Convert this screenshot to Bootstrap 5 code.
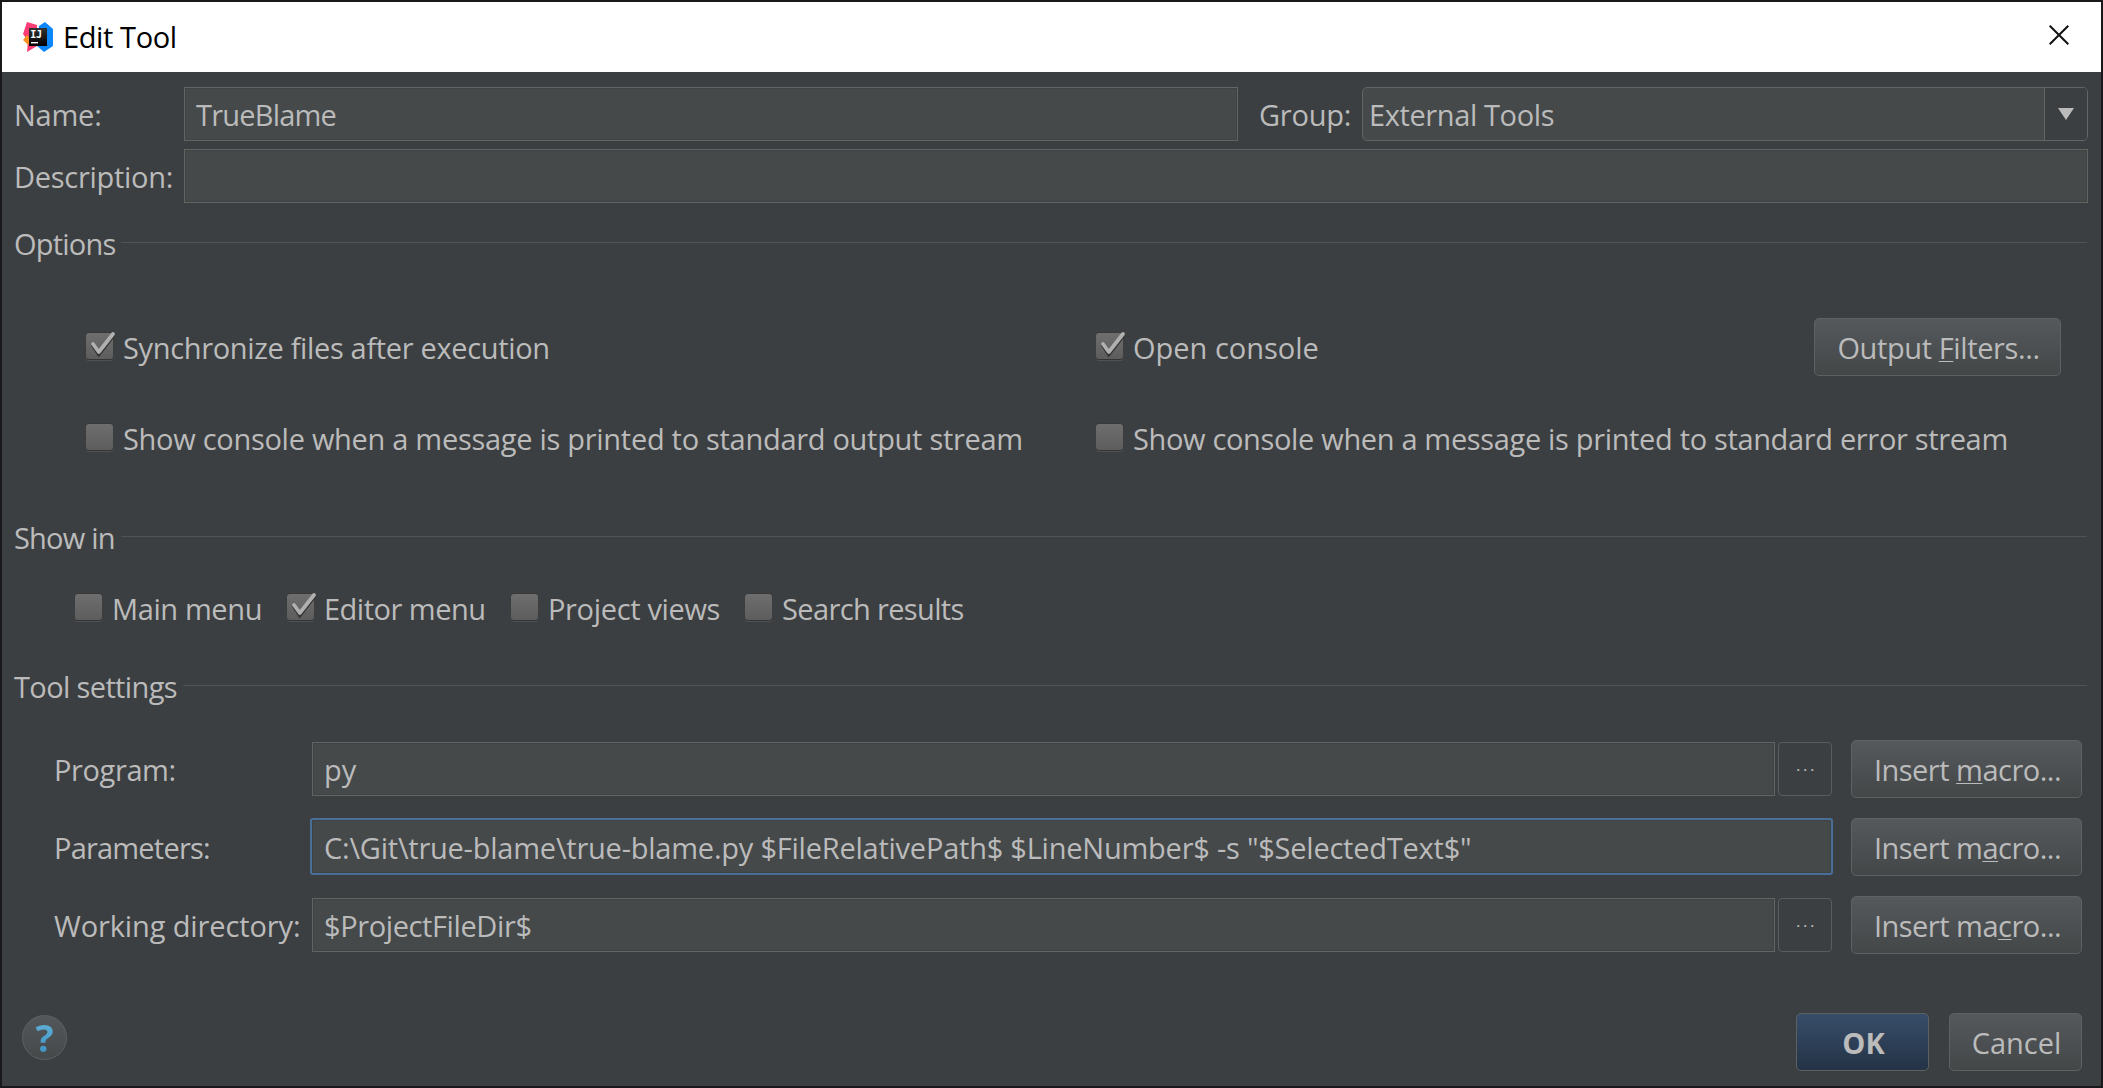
<!DOCTYPE html>
<html lang="en">
<head>
<meta charset="utf-8">
<meta name="viewport" content="width=device-width, initial-scale=1">
<title>Edit Tool</title>
<link rel="stylesheet" href="https://cdn.jsdelivr.net/npm/bootstrap@5.3.0/dist/css/bootstrap.min.css">
<style>
  body { background: #3c3f41; color: #bbb; font: 29px/40px "Open Sans", "Noto Sans", sans-serif; }
  .dialog { height: 1088px; border: 2px solid #19191b; overflow: hidden; white-space: nowrap; }
  .titlebar { height: 70px; background: #fff; color: #000; padding: 0 32px 0 21px; }
  .titlebar .caption { margin-left: 8px; }
  .content { padding: 15px 13px 0 12px; }
  .label-text { padding-top: 2px; }
  .col-label { width: 170px; flex: none; }
  .col-label-wide { width: 257px; flex: none; }
  .group-label { padding: 2px 11px 0 21px; width: 124px; flex: none; }

  .field { height: 54px; min-width: 0; background: #45494a; border: 1px solid #646464; border-radius: 0; color: #bbb;
    font: inherit; line-height: 40px; padding: 7px 0 0 11px; box-shadow: inset 0 0 0 1px #3f4344; }
  .combo { width: 726px; border-radius: 5px; padding: 0; box-shadow: none; overflow: hidden; }
  .combo .value { padding: 7px 0 0 6px; }
  .combo .arrow { width: 43px; background: #3c3f41; border-left: 1px solid #646464; }
  .desc-row { margin-top: 8px; }

  .group-head { height: 40px; }
  .group-head .rule { height: 1px; background: #515355; margin: 0 1px 3px 6px; }
  .options-head { margin-top: 21px; }
  .showin-head { margin-top: 51px; }
  .tools-head { margin-top: 39px; }

  .tick { width: 37px; height: 40px; flex: none; overflow: visible; }
  .options-grid { padding: 54px 27px 0 72px; }
  .options-grid .opt-line { height: 58px; }
  .options-grid .opt-line + .opt-line { margin-top: 33px; }
  .options-grid .first-col { width: 1010px; }
  .showin-row { height: 40px; margin-top: 30px; padding-left: 61px; }
  .w-main { width: 212px; } .w-editor { width: 224px; } .w-views { width: 234px; }

  .push { height: 58px; flex: none; border: 1px solid #5e6162; border-radius: 5px; color: #bbb; font: inherit;
    line-height: 40px; padding: 1px 0 0 2px; background: linear-gradient(#55595c, #434748); }
  .push u { text-decoration-thickness: 1px; text-underline-offset: 2px; text-decoration-skip-ink: none; }
  .push-filters { width: 247px; } .push-macro { width: 231px; margin-left: 19px; } .push-wide { width: 133px; }
  .push-default { background: linear-gradient(#374d69, #243346); font-weight: 700; }
  .browse { width: 54px; height: 54px; flex: none; border: 1px solid #5a5d5e; border-radius: 4px; color: #bbb;
    margin-left: 3px; padding: 0 0 8px 3px; font-size: 17px; line-height: 40px; letter-spacing: 2.5px; }

  .tool-rows { padding: 33px 6px 0 41px; gap: 20px; }
  .tool-rows .tool-line { height: 58px; }
  .tool-rows .label-text { margin-left: -1px; margin-right: 1px; }
  .tool-rows .field { padding-left: 11px; }
  .tool-rows .field-focus { height: 57px; margin: 0 -1px 1px -2px; padding: 8px 0 0 12px; border: 2px solid #496f98;
    border-radius: 3px; box-shadow: inset 0 0 0 1px #3d4245; }

  .foot { margin-top: 59px; padding: 0 6px 0 8px; }
  .foot .actions { gap: 20px; }
  .help { width: 45px; height: 45px; border: 1px solid #5e6162; background: linear-gradient(#53575a, #45494a);
    margin-bottom: 9px; font-size: 38px; line-height: 40px; font-weight: 700; padding: 0 0 2px; }
  .help span { background: linear-gradient(#61b0d6 20%, #3e93c6 80%); -webkit-background-clip: text; background-clip: text; color: transparent; }

  /* tracking steps, hundredths of a pixel */
  .k10 { letter-spacing: -.12px; } .k20 { letter-spacing: -.23px; } .k30 { letter-spacing: -.29px; }
  .k35 { letter-spacing: -.34px; } .k40 { letter-spacing: -.39px; } .k50 { letter-spacing: -.5px; }
  .k65 { letter-spacing: -.63px; } .k80 { letter-spacing: -.8px; }
</style>
<script src="https://cdn.jsdelivr.net/npm/bootstrap@5.3.0/dist/js/bootstrap.bundle.min.js"></script>
</head>
<body>
<svg width="0" height="0" class="position-absolute" aria-hidden="true">
  <defs>
    <linearGradient id="boxFill" x2="0" y2="1"><stop stop-color="#6e6e6e"/><stop offset="1" stop-color="#5d5d5d"/></linearGradient>
    <linearGradient id="ideFill" x2="0" y2="1"><stop stop-color="#333"/><stop offset="1" stop-color="#000"/></linearGradient>
    <symbol id="box" viewBox="0 0 36 40" overflow="visible">
      <rect x="-.5" y="6" width="28" height="28" rx="3.5" fill="#515253"/>
      <rect x="-.5" y="5.5" width="28" height="27.5" rx="3.5" fill="#323435"/>
      <rect x="0" y="6" width="27" height="26" rx="3" fill="url(#boxFill)"/>
    </symbol>
    <symbol id="boxOn" viewBox="0 0 36 40" overflow="visible">
      <use href="#box" width="36" height="40"/>
      <path d="M7 18.5 12.8 27.5 27.5 8.5" fill="none" stroke="#333" stroke-width="3.6" stroke-linecap="round"/>
      <path d="M7 17 12.8 25 27 7" fill="none" stroke="#b0b0b0" stroke-width="3.8" stroke-linecap="round" stroke-linejoin="round"/>
    </symbol>
  </defs>
</svg>

<div class="dialog">
  <header class="titlebar d-flex align-items-center">
    <svg width="32" height="32" viewBox="0 0 32 32">
      <path d="M4 1 14 4 14 25 4 31 5 20 0 13z" fill="#fe3d75"/>
      <path d="M0 19 4 14 9 19 5 24z" fill="#fc9224"/>
      <path d="M16 5 22 1 30 8V25L21 31 14 25z" fill="#0c86fb"/>
      <rect x="6" y="7" width="18" height="18" fill="url(#ideFill)"/>
      <text x="7.3" y="17" font-family="DejaVu Sans Mono" font-weight="700" font-size="10" letter-spacing="-.3" fill="#fff">IJ</text>
      <rect x="8" y="21" width="7" height="1.4" fill="#fff"/>
    </svg>
    <span class="caption k40">Edit Tool</span>
    <svg class="ms-auto mb-1" width="20" height="20" viewBox="0 0 20 20"><path d="M.7.7 19.3 19.3M19.3.7.7 19.3" stroke="#111" stroke-width="2"/></svg>
  </header>

  <main class="content">
    <div class="d-flex align-items-center">
      <div class="col-label label-text k20">Name:</div>
      <div class="field form-control flex-fill k80">TrueBlame</div>
      <div class="group-label k20">Group:</div>
      <div class="field combo form-control d-flex flex-shrink-0">
        <div class="value flex-fill k40">External Tools</div>
        <div class="arrow d-flex align-items-center justify-content-center">
          <svg width="16" height="12" viewBox="0 0 16 12"><path d="M0 0H16L8 12z" fill="#bbb"/></svg>
        </div>
      </div>
    </div>
    <div class="desc-row d-flex align-items-center">
      <div class="col-label label-text k30">Description:</div>
      <div class="field form-control flex-fill"></div>
    </div>

    <div class="group-head options-head d-flex align-items-center"><span class="k80">Options</span><div class="rule flex-fill"></div></div>
    <div class="options-grid">
      <div class="opt-line d-flex align-items-center">
        <div class="first-col d-flex align-items-center"><svg class="tick"><use href="#boxOn" width="36" height="40"/></svg><span class="label-text k35">Synchronize files after execution</span></div>
        <div class="d-flex align-items-center"><svg class="tick"><use href="#boxOn" width="36" height="40"/></svg><span class="label-text">Open console</span></div>
        <button class="btn push push-filters ms-auto k40">Output <u>F</u>ilters...</button>
      </div>
      <div class="opt-line d-flex align-items-center">
        <div class="first-col d-flex align-items-center"><svg class="tick"><use href="#box" width="36" height="40"/></svg><span class="label-text k30">Show console when a message is printed to standard output stream</span></div>
        <div class="d-flex align-items-center"><svg class="tick"><use href="#box" width="36" height="40"/></svg><span class="label-text k35">Show console when a message is printed to standard error stream</span></div>
      </div>
    </div>

    <div class="group-head showin-head d-flex align-items-center"><span class="k80">Show in</span><div class="rule flex-fill"></div></div>
    <div class="showin-row d-flex align-items-center">
      <div class="w-main d-flex align-items-center"><svg class="tick"><use href="#box" width="36" height="40"/></svg><span class="label-text k40">Main menu</span></div>
      <div class="w-editor d-flex align-items-center"><svg class="tick"><use href="#boxOn" width="36" height="40"/></svg><span class="label-text k50">Editor menu</span></div>
      <div class="w-views d-flex align-items-center"><svg class="tick"><use href="#box" width="36" height="40"/></svg><span class="label-text k35">Project views</span></div>
      <div class="d-flex align-items-center"><svg class="tick"><use href="#box" width="36" height="40"/></svg><span class="label-text k65">Search results</span></div>
    </div>

    <div class="group-head tools-head d-flex align-items-center"><span class="k65">Tool settings</span><div class="rule flex-fill"></div></div>
    <div class="tool-rows d-flex flex-column">
      <div class="tool-line d-flex align-items-center">
        <div class="col-label-wide label-text k40">Program:</div>
        <div class="field form-control flex-fill">py</div>
        <button class="btn browse">...</button>
        <button class="btn push push-macro k50">Insert <u>m</u>acro...</button>
      </div>
      <div class="tool-line d-flex align-items-center">
        <div class="col-label-wide label-text k80">Parameters:</div>
        <div class="field field-focus form-control flex-fill k20">C:\Git\true-blame\true-blame.py $FileRelativePath$ $LineNumber$ -s "$SelectedText$"</div>
        <button class="btn push push-macro k50">Insert m<u>a</u>cro...</button>
      </div>
      <div class="tool-line d-flex align-items-center">
        <div class="col-label-wide label-text k10">Working directory:</div>
        <div class="field form-control flex-fill k40">$ProjectFileDir$</div>
        <button class="btn browse">...</button>
        <button class="btn push push-macro k50">Insert ma<u>c</u>ro...</button>
      </div>
    </div>

    <footer class="foot d-flex align-items-center">
      <button class="btn help rounded-circle"><span>?</span></button>
      <div class="actions d-flex ms-auto">
        <button class="btn push push-wide push-default">OK</button>
        <button class="btn push push-wide">Cancel</button>
      </div>
    </footer>
  </main>
</div>
</body>
</html>
